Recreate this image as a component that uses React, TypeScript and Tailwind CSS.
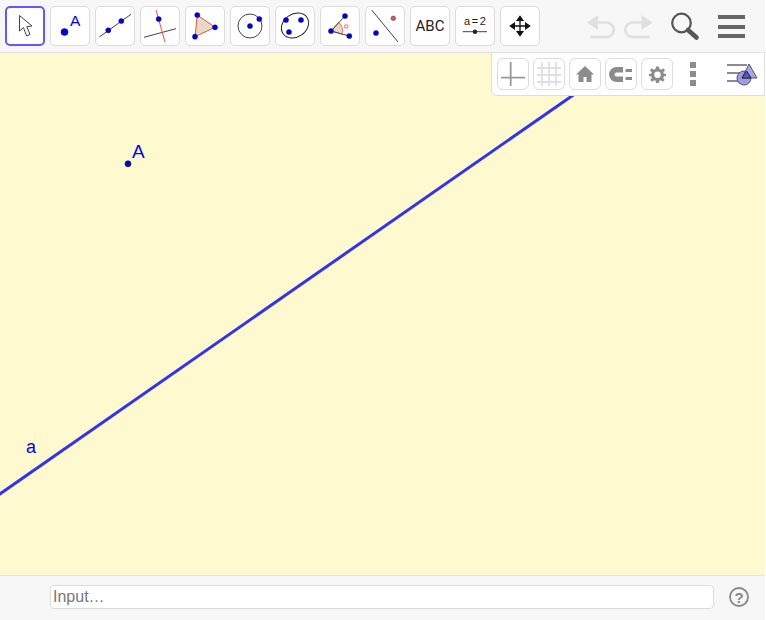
import type { ReactNode } from 'react';

const BLUE = '#0000d8';
const RED = '#e4543f';

function Dot({ x, y, r = 2.6, fill = BLUE }: { x: number; y: number; r?: number; fill?: string }) {
  return <circle cx={x} cy={y} r={r} fill={fill} stroke="#1a1a40" strokeWidth="0.4" />;
}

function ToolButton({ active, children }: { active?: boolean; children: ReactNode }) {
  return (
    <div
      className={
        active
          ? 'w-[40px] h-[40px] rounded-[5px] bg-white border-2 border-[#6557ff]'
          : 'w-[40px] h-[40px] rounded-[5px] bg-white border border-[#dcdcdc]'
      }
    >
      {children}
    </div>
  );
}

function Icon({ children }: { children: ReactNode }) {
  return (
    <svg width="38" height="38" viewBox="0 0 38 38" className="block">
      {children}
    </svg>
  );
}

function StyleButton({ children }: { children: ReactNode }) {
  return (
    <div className="w-[32px] h-[32px] rounded-[6px] bg-white border border-[#dcdcdc] flex items-center justify-center">
      {children}
    </div>
  );
}

export default function App() {
  return (
    <div className="w-[766px] h-[620px] bg-white overflow-hidden font-['Liberation_Sans',sans-serif]">
      <div className="w-[765px] h-[620px] flex flex-col bg-[#f7f7f7]">
        {/* Toolbar */}
        <div className="h-[53px] shrink-0 flex items-start pt-[6px] pl-[5px] gap-[5px] border-b border-[#e2e2e2]">
          <ToolButton active>
            <svg width="36" height="36" viewBox="0 0 36 36" className="block">
              <path
                d="M12.5 7.5 L12.5 23 L16.5 19.6 L19.6 28 L23 26.5 L19.8 18.6 L25 18 Z"
                fill="#fff"
                stroke="#444"
                strokeWidth="1"
                strokeLinejoin="round"
              />
            </svg>
          </ToolButton>
          <ToolButton>
            <Icon>
              <Dot x={13.5} y={25} r={3.6} />
              <text x="19" y="18.5" fontSize="15.5" fill="#0000e0" fontFamily="Liberation Sans, sans-serif">
                A
              </text>
            </Icon>
          </ToolButton>
          <ToolButton>
            <Icon>
              <line x1="3.3" y1="30" x2="35" y2="7.3" stroke="#444" strokeWidth="1" />
              <Dot x={12.3} y={23.3} />
              <Dot x={25.3} y={14} />
            </Icon>
          </ToolButton>
          <ToolButton>
            <Icon>
              <line x1="3" y1="30.3" x2="35" y2="21.7" stroke="#444" strokeWidth="1" />
              <line x1="15" y1="3" x2="24" y2="35" stroke={RED} strokeWidth="1" />
              <Dot x={17.7} y={12} />
            </Icon>
          </ToolButton>
          <ToolButton>
            <Icon>
              <polygon points="11.3,8 29,20.3 9,29.7" fill="#e8d8c8" stroke={RED} strokeWidth="1" />
              <Dot x={11.3} y={8} />
              <Dot x={29} y={20.3} />
              <Dot x={9} y={29.7} />
            </Icon>
          </ToolButton>
          <ToolButton>
            <Icon>
              <circle cx="19" cy="19" r="12" fill="none" stroke="#444" strokeWidth="1" />
              <Dot x={19} y={19} />
              <Dot x={28.3} y={12} />
            </Icon>
          </ToolButton>
          <ToolButton>
            <Icon>
              <ellipse cx="19" cy="18.5" rx="14.5" ry="11.5" transform="rotate(-35 19 18.5)" fill="none" stroke="#222" strokeWidth="1" />
              <Dot x={10} y={13} />
              <Dot x={25} y={13} />
              <Dot x={13} y={25} />
            </Icon>
          </ToolButton>
          <ToolButton>
            <Icon>
              <path d="M10 24 L17.7 15.4 A11.5 11.5 0 0 1 21 27.2 Z" fill="#e8d8c8" stroke={RED} strokeWidth="0.8" />
              <line x1="10" y1="24" x2="24" y2="9" stroke="#444" strokeWidth="1" />
              <line x1="10" y1="24" x2="28.3" y2="29" stroke="#444" strokeWidth="1" />
              <circle cx="25.2" cy="19.5" r="1.7" fill="none" stroke={RED} strokeWidth="0.9" />
              <Dot x={10} y={24} />
              <Dot x={24} y={9} />
              <Dot x={28.3} y={29} />
            </Icon>
          </ToolButton>
          <ToolButton>
            <Icon>
              <line x1="5.7" y1="3" x2="32" y2="35" stroke="#444" strokeWidth="1" />
              <Dot x={10} y={26} />
              <Dot x={27.3} y={11.3} r={2.3} fill={RED} />
            </Icon>
          </ToolButton>
          <div className="w-[40px] h-[40px] rounded-[5px] bg-white border border-[#dcdcdc] flex items-center justify-center font-['Roboto',sans-serif] text-[15px] text-[#222]">
            ABC
          </div>
          <ToolButton>
            <Icon>
              <text x="19" y="18" textAnchor="middle" fontSize="11" wordSpacing="-1.5" fill="#222" fontFamily="Liberation Sans, sans-serif">
                a = 2
              </text>
              <line x1="6.7" y1="24.7" x2="31" y2="24.7" stroke="#444" strokeWidth="1" />
              <circle cx="19" cy="24.7" r="2.2" fill="#222" />
            </Icon>
          </ToolButton>
          <ToolButton>
            <Icon>
              <path d="M19 10 V28 M10 19 H28" stroke="#111" strokeWidth="1.3" />
              <path d="M19 8.2 L15 14 H23 Z M19 29.8 L15 24 H23 Z M8.2 19 L14 15 V23 Z M29.8 19 L24 15 V23 Z" fill="#111" />
            </Icon>
          </ToolButton>

          {/* Undo, redo, search, menu */}
          <svg width="29" height="24" viewBox="0 0 29 24" className="ml-[42px] mt-[9px] shrink-0">
            <path d="M4 7.5 H19.5 A7.25 7.25 0 0 1 19.5 22 H3" fill="none" stroke="#e0e0e0" strokeWidth="2.6" />
            <path d="M0 7.5 L11 0 V15 Z" fill="#e0e0e0" />
          </svg>
          <svg width="29" height="24" viewBox="0 0 29 24" className="ml-[3px] mt-[9px] shrink-0">
            <path d="M25 7.5 H8.5 A7.25 7.25 0 0 0 8.5 22 H26" fill="none" stroke="#e0e0e0" strokeWidth="2.6" />
            <path d="M28.5 7.5 L17.5 0 V15 Z" fill="#e0e0e0" />
          </svg>
          <svg width="29" height="29" viewBox="0 0 29 29" className="ml-[13px] mt-[6px] shrink-0">
            <circle cx="10.5" cy="11" r="9.3" fill="none" stroke="#555" strokeWidth="2.2" />
            <path d="M17 18 L25.5 25.5" stroke="#555" strokeWidth="4.6" strokeLinecap="round" />
          </svg>
          <div className="ml-[13px] mt-[9px] w-[27px] flex flex-col gap-[5.5px] shrink-0">
            <div className="h-[4px] bg-[#666]" />
            <div className="h-[4px] bg-[#666]" />
            <div className="h-[4px] bg-[#666]" />
          </div>
        </div>

        {/* Graphics view */}
        <div className="relative flex-1 bg-[#fff9d0] overflow-hidden">
          <svg width="765" height="522" viewBox="0 53 765 522" className="absolute left-0 top-0">
            <line x1="-1" y1="494.5" x2="574" y2="94.5" stroke="#3333ee" strokeWidth="3" />
            <circle cx="128" cy="163.8" r="3" fill="#0000d8" stroke="#1a1a40" strokeWidth="0.8" />
          </svg>
          <span className="absolute left-[132px] top-[88px] text-[19px] leading-[22px] text-[#0000ff]">A</span>
          <span className="absolute left-[26px] top-[383px] text-[18px] leading-[22px] text-[#0000ff]">a</span>

          {/* Style bar */}
          <div className="absolute right-0 top-0 w-[274px] h-[43px] bg-white border-l border-b border-r border-[#dedede] rounded-bl-[6px] flex items-center pl-[5px] gap-[4px]">
            <StyleButton>
              <svg width="28" height="28" viewBox="0 0 28 28">
                <path d="M11.7 2 V26 M2 17.7 H26" stroke="#9a9a9a" strokeWidth="1.8" />
              </svg>
            </StyleButton>
            <StyleButton>
              <svg width="28" height="28" viewBox="0 0 28 28">
                <path d="M7 2 V26 M14 2 V26 M21 2 V26 M2 8 H26 M2 15 H26 M2 22 H26" stroke="#e0e0e0" strokeWidth="1.8" />
              </svg>
            </StyleButton>
            <StyleButton>
              <svg width="20" height="20" viewBox="0 0 20 20">
                <path d="M10 2 L19 10.5 H16.5 V18 H11.5 V13 H8.5 V18 H3.5 V10.5 H1 Z" fill="#8c8c8c" />
              </svg>
            </StyleButton>
            <StyleButton>
              <svg width="24" height="15" viewBox="0 0 24 15">
                <path d="M14 2.75 H7.5 A4.75 4.75 0 0 0 7.5 12.25 H14" fill="none" stroke="#8c8c8c" strokeWidth="5.5" />
                <path d="M16.5 2 H23 V5 H16.5 Z M16.5 10 H23 V13 H16.5 Z" fill="#8c8c8c" />
              </svg>
            </StyleButton>
            <StyleButton>
              <svg width="19" height="19" viewBox="0 0 20 20">
                <path
                  d="M8.5 1.5 H11.5 L12 4 L14 4.9 L16.2 3.5 L18 5.7 L16.1 7.4 L16.5 9 L19 9.5 V11.5 L16.5 12 L16 13.6 L17.6 15.8 L15.6 17.6 L13.6 16 L12 16.6 L11.5 19 H8.5 L8 16.6 L6.4 16 L4.4 17.6 L2.4 15.8 L4 13.6 L3.5 12 L1 11.5 V9.5 L3.5 9 L3.9 7.4 L2 5.7 L3.8 3.5 L6 4.9 L8 4 Z"
                  fill="#8c8c8c"
                />
                <circle cx="10" cy="10.3" r="3.4" fill="#fff" />
              </svg>
            </StyleButton>
            <div className="ml-[13px] w-[6px] flex flex-col gap-[3px]">
              <div className="h-[6px] bg-[#8c8c8c]" />
              <div className="h-[6px] bg-[#8c8c8c]" />
              <div className="h-[6px] bg-[#8c8c8c]" />
            </div>
            <svg width="34" height="34" viewBox="0 0 34 34" className="ml-[25px] shrink-0">
              <path d="M2 8 H22 M2 16 H15 M2 24 H13" stroke="#8c8c8c" strokeWidth="2" />
              <circle cx="19" cy="21" r="7" fill="#9c9ce6" stroke="#555" strokeWidth="1" />
              <polygon points="24,7 32,21 17,21" fill="#9c9ce6" fillOpacity="0.9" stroke="#555" strokeWidth="1" />
              <polygon points="21.5,14 26,21 17,21" fill="#5555dd" stroke="#222" strokeWidth="1" />
            </svg>
          </div>
        </div>

        {/* Input bar */}
        <div className="h-[45px] shrink-0 border-t border-[#e2e2e2] flex items-start pt-[9px] pl-[50px]">
          <div className="w-[664px] h-[24px] bg-white border border-[#dcdcdc] rounded-[4px] flex items-center pl-[2px] text-[16px] text-[#777]">
            Input…
          </div>
          <svg width="22" height="22" viewBox="0 0 22 22" className="ml-[14px] mt-px">
            <circle cx="11" cy="11" r="9" fill="none" stroke="#888" strokeWidth="1.8" />
            <text x="11" y="16.5" textAnchor="middle" fontSize="15" fontWeight="700" fill="#888" fontFamily="Liberation Sans, sans-serif">
              ?
            </text>
          </svg>
        </div>
      </div>
    </div>
  );
}
